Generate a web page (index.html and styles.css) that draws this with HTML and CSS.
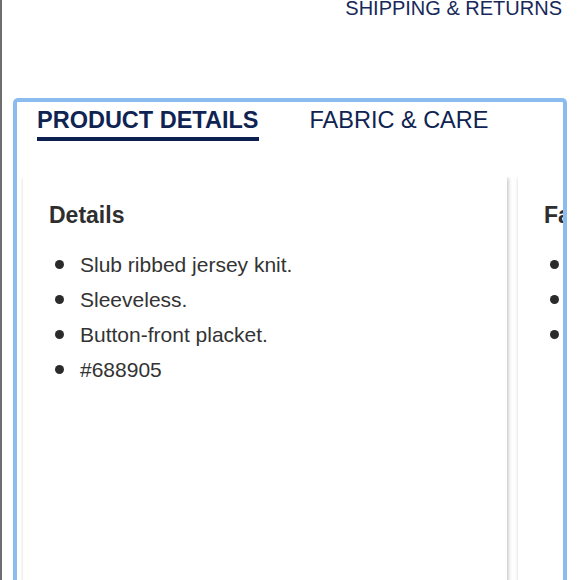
FILE: index.html
```html
<!DOCTYPE html>
<html lang="en">
<head>
<meta charset="utf-8">
<title>Product details</title>
<link rel="stylesheet" href="styles.css">
</head>
<body>
<div class="page">
  <div class="top-links">
    <a class="top-link" href="#">SHIPPING &amp; RETURNS</a>
  </div>
  <section class="panel">
    <nav class="tabs">
      <a class="tab active" href="#">PRODUCT DETAILS</a>
      <a class="tab" href="#">FABRIC &amp; CARE</a>
    </nav>
    <div class="cards">
      <div class="card">
        <h3 class="card-title">Details</h3>
        <ul class="bullets">
          <li>Slub ribbed jersey knit.</li>
          <li>Sleeveless.</li>
          <li>Button-front placket.</li>
          <li>#688905</li>
        </ul>
      </div>
      <div class="card">
        <h3 class="card-title">Fabric &amp; Care</h3>
        <ul class="bullets">
          <li>Cotton.</li>
          <li>Machine wash.</li>
          <li>Imported.</li>
        </ul>
      </div>
    </div>
  </section>
</div>
</body>
</html>
```
FILE: styles.css
```css
html, body {
  margin: 0;
  padding: 0;
  background: #ffffff;
}

body {
  font-family: "Liberation Sans", Arial, sans-serif;
  overflow: hidden;
}

.page {
  border-left: 2px solid #6e6e6e;
  min-height: 580px;
  box-sizing: border-box;
}

.top-links {
  display: flex;
  justify-content: flex-end;
  padding-right: 18px;
  height: 17px;
}

.top-link {
  font-size: 20px;
  line-height: 17px;
  color: #16295a;
  text-decoration: none;
}

.panel {
  margin: 81px 13px 0 11px;
  border: 4px solid #8bbcef;
  border-bottom: none;
  border-radius: 5px 5px 0 0;
  height: 520px;
  box-sizing: border-box;
  overflow: hidden;
}

.tabs {
  display: flex;
  gap: 51px;
  padding: 4px 0 0 20px;
}

.tab {
  font-size: 23.5px;
  line-height: 28px;
  color: #0f2452;
  text-decoration: none;
  padding-bottom: 3px;
  border-bottom: 4px solid transparent;
}

.tab.active {
  font-weight: bold;
  border-bottom-color: #0c2150;
}

.cards {
  display: flex;
  gap: 11px;
  margin-top: 36px;
  padding: 0 0 0 6px;
  overflow: hidden;
}

.card {
  flex: 0 0 484px;
  box-sizing: border-box;
  min-height: 480px;
  padding: 25px 26px;
  background: #fff;
  box-shadow: 1px 1px 4px rgba(0, 0, 0, 0.28);
}

.card-title {
  margin: 0;
  font-size: 23px;
  line-height: 26px;
  font-weight: bold;
  color: #2e2e2e;
  white-space: nowrap;
}

.bullets {
  list-style: none;
  margin: 19px 0 0;
  padding: 0;
}

.bullets li {
  display: flex;
  align-items: center;
  height: 35px;
  font-size: 21px;
  color: #333333;
  white-space: nowrap;
}

.bullets li::before {
  content: "";
  flex: 0 0 9px;
  width: 9px;
  height: 9px;
  margin: 0 16px 0 6px;
  border-radius: 50%;
  background: #2b2b2b;
}
```
